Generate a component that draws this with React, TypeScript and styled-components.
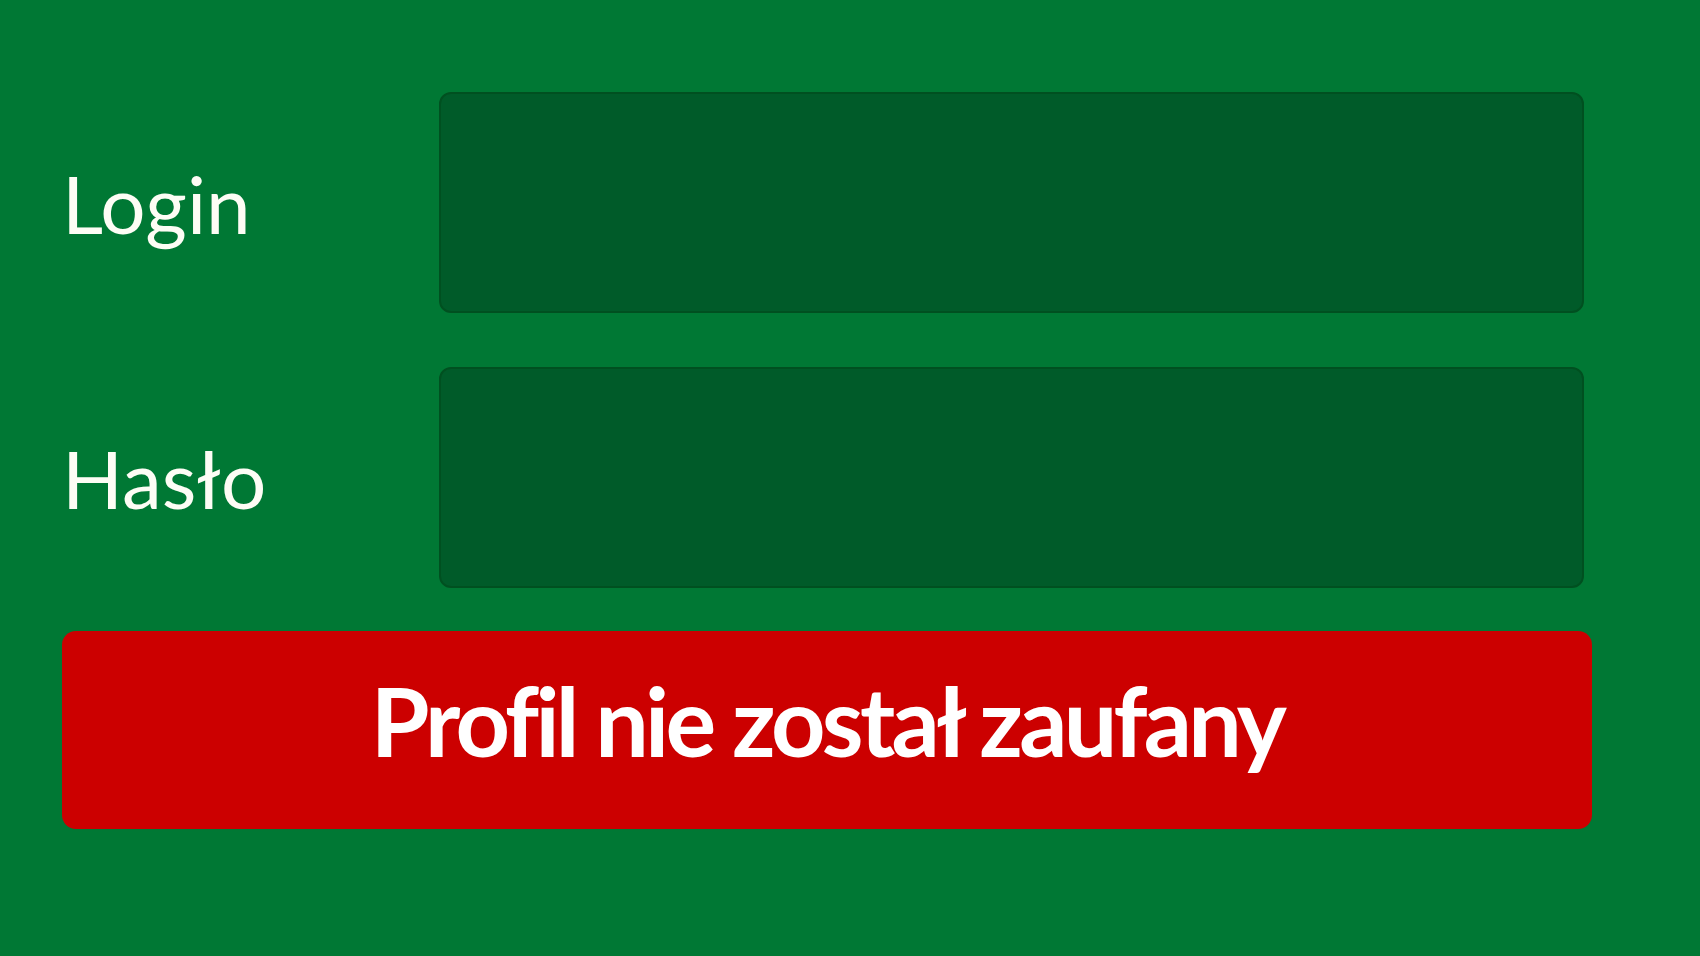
import React from 'react';
import styled, { createGlobalStyle } from 'styled-components';

const GlobalStyle = createGlobalStyle`
  html, body {
    margin: 0;
    padding: 0;
    background-color: #007834;
  }
  * {
    box-sizing: border-box;
  }
`;

const Page = styled.div`
  min-height: 100vh;
  padding: 92px 108px 0 62px;
  background-color: #007834;
  font-family: 'Lato', 'Noto Sans', sans-serif;
`;

const Form = styled.form`
  display: flex;
  flex-direction: column;
`;

interface RowProps {
  last?: boolean;
}

const Row = styled.div<RowProps>`
  display: grid;
  grid-template-columns: 377px 1fr;
  align-items: center;
  padding-right: 8px;
  margin-bottom: ${(props): string => (props.last ? '43px' : '54px')};
`;

const Label = styled.label`
  padding-left: 0;
  color: #fdfdf5;
  font-size: 80px;
  font-weight: 400;
  line-height: 1;
`;

const Input = styled.input`
  display: block;
  width: 100%;
  height: 221px;
  margin: 0;
  padding: 0 24px;
  background-color: #005b29;
  border: 2px solid #005020;
  border-radius: 12px;
  color: #ffffff;
  font-family: inherit;
  font-size: 60px;
  outline: none;
`;

const Submit = styled.button`
  display: flex;
  justify-content: center;
  align-items: center;
  width: 100%;
  height: 198px;
  margin: 0;
  padding: 0 0 20px;
  background-color: #cc0000;
  border: none;
  border-radius: 14px;
  color: #ffffff;
  font-family: 'Lato', 'Noto Sans', sans-serif;
  font-size: 95px;
  font-weight: 700;
  letter-spacing: -3.7px;
  line-height: 1;
  cursor: pointer;
`;

const App: React.FC = () => {
  return (
    <>
      <GlobalStyle />
      <Page>
        <Form onSubmit={(e): void => e.preventDefault()}>
          <Row>
            <Label htmlFor="login">Login</Label>
            <Input id="login" type="text" />
          </Row>
          <Row last>
            <Label htmlFor="haslo">Hasło</Label>
            <Input id="haslo" type="password" />
          </Row>
          <Submit type="submit">Profil nie został zaufany</Submit>
        </Form>
      </Page>
    </>
  );
};

export default App;
